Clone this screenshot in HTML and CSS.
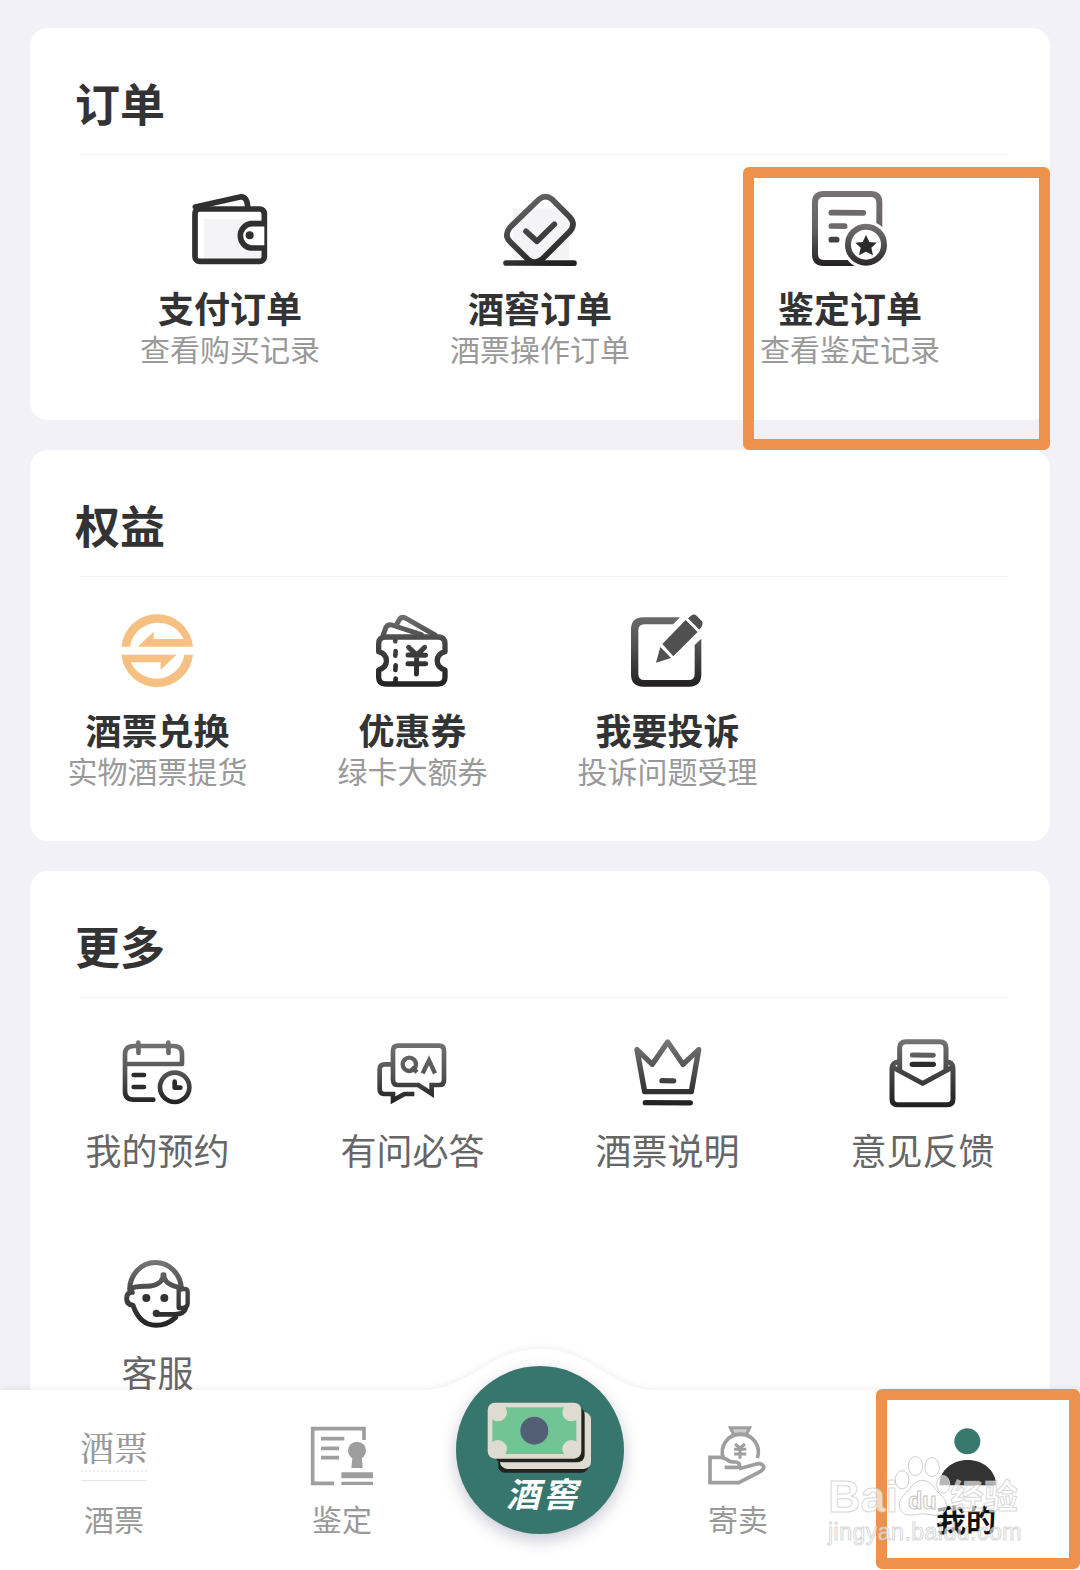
FILE: index.html
```html
<!DOCTYPE html>
<html lang="zh-CN">
<head>
    <meta charset="UTF-8" />
    <meta name="viewport" content="width=device-width, initial-scale=1.0" />
    <title>我的</title>
    <link rel="stylesheet" href="styles.css">
</head>
<body>
    <main class="content">
        <section class="card">
            <h2>订单</h2>
            <div class="grid three">
                <div class="item">
                    <svg class="icon" viewBox="510 510 240 240">
                        <path class="shade" d="M552 597H725V716H552Z" />
                        <g class="line" stroke="#303030" stroke-width="17">
                            <rect x="525" y="567" width="208" height="157" rx="14" />
                            <path d="M526 561L660 531Q683 528 683 565" />
                            <path fill="#fff" d="M733 611H692a37 37 0 0 0 0 73H733" />
                        </g>
                        <circle cx="689" cy="646" r="12" fill="#303030" />
                    </svg>
                    <h3>支付订单</h3>
                    <p>查看购买记录</p>
                </div>
                <div class="item">
                    <svg class="icon" viewBox="180 60 240 240">
                        <linearGradient id="g2" gradientUnits="userSpaceOnUse" x1="240" y1="80" x2="320" y2="285">
                            <stop offset="0" stop-color="#666" /><stop offset="1" stop-color="#222" />
                        </linearGradient>
                        <path class="shade" d="M218 115H388V268H218Z" />
                        <g class="line" stroke="url(#g2)" stroke-width="17">
                            <path d="M297 88Q316 72 336 88L390 142Q408 163 390 184L306 268Q286 284 266 270L209 214Q192 195 209 173Z" />
                            <path d="M258 184L291 214L343 163" />
                            <path d="M198 279L402 279.5" />
                        </g>
                    </svg>
                    <h3>酒窖订单</h3>
                    <p>酒票操作订单</p>
                </div>
                <div class="item">
                    <svg class="icon" viewBox="240 90 240 240">
                        <linearGradient id="g3" gradientUnits="userSpaceOnUse" x1="0" y1="95" x2="0" y2="318">
                            <stop offset="0" stop-color="#777374" /><stop offset="0.5" stop-color="#666264" /><stop offset="1" stop-color="#232122" />
                        </linearGradient>
                        <linearGradient id="g3b" gradientUnits="userSpaceOnUse" x1="0" y1="190" x2="0" y2="318">
                            <stop offset="0" stop-color="#777374" /><stop offset="1" stop-color="#2a2829" />
                        </linearGradient>
                        <path class="line" stroke="url(#g3)" stroke-width="18" d="M370 309H281Q255 309 255 283V128Q255 102 281 102H422Q448 102 448 128V200" />
                        <path class="line" stroke="#6e6a6c" stroke-width="17" d="M304 158L400 158.5M304 198L344 198.5" />
                        <path class="line" stroke="#444143" stroke-width="17" d="M304 239H320" />
                        <circle cx="408" cy="254" r="72" fill="#fff" />
                        <circle cx="408" cy="254" r="54" fill="#fff" stroke="url(#g3b)" stroke-width="18" />
                        <path fill="#2c2a2d" d="M408 225L418 246L440 248L424 263L429 286L408 275L387 286L392 263L376 248L398 246Z" />
                    </svg>
                    <h3>鉴定订单</h3>
                    <p>查看鉴定记录</p>
                </div>
            </div>
        </section>

        <section class="card">
            <h2>权益</h2>
            <div class="grid">
                <div class="item">
                    <svg class="icon" viewBox="204 64 240 240" fill="#f6c083">
                        <path id="swap" d="M214 168A108 108 0 0 1 429 168H263L311 123V145H401A85 85 0 0 0 240 168Z" />
                        <use href="#swap" transform="rotate(180 321.5 180)" />
                    </svg>
                    <h3>酒票兑换</h3>
                    <p>实物酒票提货</p>
                </div>
                <div class="item">
                    <svg class="icon" viewBox="130 64 240 240">
                        <linearGradient id="g5" gradientUnits="userSpaceOnUse" x1="0" y1="75" x2="0" y2="285">
                            <stop offset="0" stop-color="#707070" /><stop offset="0.4" stop-color="#444" /><stop offset="1" stop-color="#222" />
                        </linearGradient>
                        <g class="line" stroke="url(#g5)" stroke-width="16">
                            <path d="M168 139H325Q346 139 346 160V183C315 192 315 228 346 238V260Q346 280 325 280H168Q147 280 147 260V238C178 228 178 192 147 183V160Q147 139 168 139Z" />
                            <path stroke-width="15" d="M161 132L168 112Q173 100 187 103L275 132M202 100L209 87Q216 76 229 83L316 133" />
                            <path stroke-width="14" d="M197 145V152M198 181L197 195M198 224L197 238M198 264L197 276" />
                            <path stroke-width="15" d="M237 170L261 193L285 170M235 193L288 193.5M235 219L288 219.5M261 195L260.500 250" />
                        </g>
                    </svg>
                    <h3>优惠券</h3>
                    <p>绿卡大额券</p>
                </div>
                <div class="item">
                    <svg class="icon" viewBox="894 64 240 240">
                        <linearGradient id="g6" gradientUnits="userSpaceOnUse" x1="0" y1="75" x2="0" y2="288">
                            <stop offset="0" stop-color="#6c6c6c" /><stop offset="0.5" stop-color="#4c4b4b" /><stop offset="1" stop-color="#231f20" />
                        </linearGradient>
                        <path fill="url(#g6)" d="M1050 80H940Q903 80 903 117V251Q903 288 940 288H1078Q1114 288 1114 251V144L1094 163V250Q1094 268 1076 268H943Q925 268 925 250V119Q925 101 943 101H1029Z" />
                        <path fill="#505050" d="M1067 88L1103 124L1030 197L997 160ZM991 169L1023 202L978 216ZM1074 83L1083 75Q1092 68 1100 75L1116 92Q1122 104 1108 117Z" />
                    </svg>
                    <h3>我要投诉</h3>
                    <p>投诉问题受理</p>
                </div>
            </div>
        </section>

        <section class="card">
            <h2>更多</h2>
            <div class="grid more">
                <div class="item">
                    <svg class="icon" viewBox="175 38 240 240">
                        <linearGradient id="g7" gradientUnits="userSpaceOnUse" x1="0" y1="60" x2="0" y2="250">
                            <stop offset="0" stop-color="#747474" /><stop offset="0.5" stop-color="#555" /><stop offset="1" stop-color="#222" />
                        </linearGradient>
                        <g class="line" stroke="url(#g7)" stroke-width="14">
                            <path d="M281 238H222Q196 238 196 212V102Q196 77 222 77H342Q367 77 367 102V131H198" />
                            <path d="M236 67L236.500 98M326 67L326.500 98" />
                            <circle cx="345" cy="201" r="44" />
                        </g>
                        <path class="line" stroke="#2b2b2b" stroke-width="14" d="M222 164H253M222 200H253M345 184V202H362" />
                    </svg>
                    <span>我的预约</span>
                </div>
                <div class="item">
                    <svg class="icon" viewBox="940 38 240 240">
                        <linearGradient id="g8" gradientUnits="userSpaceOnUse" x1="0" y1="70" x2="0" y2="245">
                            <stop offset="0" stop-color="#707070" /><stop offset="0.5" stop-color="#555" /><stop offset="1" stop-color="#222" />
                        </linearGradient>
                        <g class="line sharp" stroke="url(#g8)" stroke-width="14">
                            <path d="M1016 76H1138Q1153 76 1153 91V178Q1153 194 1138 194H1116V220L1076 194H1016Q1000 194 1000 178V91Q1000 76 1016 76Z" />
                            <path d="M996 132H975Q960 132 960 147V206Q960 221 973 221H1000V240L1034 221H1064" />
                            <circle cx="1049" cy="132" r="20" stroke-width="13" />
                            <path stroke-width="13" d="M1056 140L1072 156M1089 159L1108 120L1126 159" />
                        </g>
                    </svg>
                    <span>有问必答</span>
                </div>
                <div class="item">
                    <svg class="icon" viewBox="143 38 240 240">
                        <linearGradient id="g9" gradientUnits="userSpaceOnUse" x1="0" y1="60" x2="0" y2="250">
                            <stop offset="0" stop-color="#777" /><stop offset="1" stop-color="#222" />
                        </linearGradient>
                        <g class="line" stroke="url(#g9)" stroke-width="16">
                            <path d="M193 214H333L355 88L308 132L262 65L216 132L170 88Z" />
                            <path d="M245 181L280 181.500M195 247L330 247.500" />
                        </g>
                    </svg>
                    <span>酒票说明</span>
                </div>
                <div class="item">
                    <svg class="icon" viewBox="909 38 240 240">
                        <linearGradient id="g10" gradientUnits="userSpaceOnUse" x1="0" y1="60" x2="0" y2="255">
                            <stop offset="0" stop-color="#747474" /><stop offset="0.5" stop-color="#444" /><stop offset="1" stop-color="#222" />
                        </linearGradient>
                        <g class="line" stroke="url(#g10)" stroke-width="15">
                            <path d="M958 125Q936 124 936 146V236Q936 253 953 253H1102Q1119 253 1119 236V146Q1119 124 1099 125" />
                            <path d="M959 148V83Q959 64 978 64H1079Q1098 64 1098 83V148" />
                            <path d="M940 142L1028 189L1115 142" />
                            <path d="M997 104L1060 104.500" />
                        </g>
                        <path class="line" stroke="#2b2b2b" stroke-width="16" d="M997 132H1060" />
                    </svg>
                    <span>意见反馈</span>
                </div>
                <div class="item">
                    <svg class="icon" viewBox="175 45 240 240">
                        <linearGradient id="g11" gradientUnits="userSpaceOnUse" x1="0" y1="60" x2="0" y2="262">
                            <stop offset="0" stop-color="#777" /><stop offset="0.5" stop-color="#444" /><stop offset="1" stop-color="#222" />
                        </linearGradient>
                        <g class="line" stroke="url(#g11)" stroke-width="15">
                            <path d="M210 150A77 81 0 0 1 365 148" />
                            <path d="M212 146Q228 138 262 139Q303 136 310 112V104L313 104V112Q320 136 365 143" />
                            <path d="M218 157Q200 158 201 177Q202 194 220 196Q240 256 289 256Q322 256 348 232" />
                            <path stroke-width="14" d="M290 223H345Q374 223 379 203" />
                            <path stroke-width="13" d="M357 147H376Q384 147 384 157V190Q384 203 370 204H357Z" />
                        </g>
                        <g fill="#333">
                            <circle cx="260" cy="174" r="12" />
                            <circle cx="314" cy="174" r="12" />
                            <circle cx="290" cy="220" r="11" />
                        </g>
                    </svg>
                    <span>客服</span>
                </div>
            </div>
        </section>
    </main>

    <div class="mark mark-order"></div>

    <nav class="tabbar">
        <svg class="tabbar-bg" viewBox="0 0 1080 226">
            <path fill="#fff" d="M0 45H424C444 45 456 37 474 28C500 12 515 4 540 4C565 4 580 12 606 28C624 38 634 45 656 45H1080V226H0Z" />
        </svg>
        <div class="tab">
            <div class="tab-logo">
                <b>酒票</b>
                <i></i>
                <u></u>
            </div>
            <span>酒票</span>
        </div>
        <div class="tab">
            <svg class="icon" viewBox="726 540 240 240" fill="#9e9e9e">
                <path fill="none" stroke="#9e9e9e" stroke-width="11" d="M822 730H758V566H912V600M783 596H853M783 625H837M783 653H837" />
                <circle cx="891" cy="632" r="27" />
                <path d="M878 645H905L908 684H874ZM844 697H939V715H844ZM844 725H939V735H844Z" />
            </svg>
            <span>鉴定</span>
        </div>
        <div class="tab tab-main">
            <div class="cellar">
                <svg viewBox="198 210 330 225">
                    <rect x="238" y="261" width="270" height="167" rx="20" fill="#222" />
                    <rect x="243" y="246" width="273" height="171" rx="22" fill="#dedcd0" />
                    <rect x="228" y="232" width="269" height="165" rx="22" fill="#222" />
                    <rect x="206" y="218" width="281" height="168" rx="22" fill="#dedcd0" />
                    <rect x="220" y="232" width="252" height="140" fill="#71c594" />
                    <g fill="#dedcd0">
                        <circle cx="237" cy="247" r="27" />
                        <circle cx="457" cy="247" r="27" />
                        <circle cx="237" cy="357" r="27" />
                        <circle cx="457" cy="357" r="27" />
                    </g>
                    <circle cx="346" cy="302" r="42" fill="#525f75" />
                </svg>
                <em>酒窖</em>
            </div>
        </div>
        <div class="tab">
            <svg class="icon" viewBox="832 270 240 240">
                <g fill="none" stroke="#9e9e9e" stroke-width="11">
                    <path fill="#ccc" stroke-width="9" d="M929 293H987L977 314H939Z" />
                    <path d="M908 384A54 54 0 1 1 1010 384" />
                    <path stroke-width="9" d="M943 342L958 354L973 342M940 358H977M940 372H977M958 354V386" />
                    <path d="M912 412H955Q960 398 946 396Q928 397 918 388Q908 382 898 382H868V458H954L1020 424Q1034 414 1027 406Q1018 398 1005 403L955 416" />
                </g>
            </svg>
            <span>寄卖</span>
        </div>
        <div class="tab active">
            <svg class="icon" viewBox="380 150 240 240">
                <circle cx="504" cy="214" r="39" fill="#37796d" />
                <path fill="#333" d="M420 346C420 300 460 270 505 270C550 270 590 300 590 346Z" />
            </svg>
            <span>我的</span>
        </div>
    </nav>

    <div class="mark mark-mine"></div>

    <div class="watermark">
        <div class="watermark-logo">
            <span>Bai</span>
            <svg viewBox="280 250 180 190">
                <g fill="#fff" fill-opacity="0.65" stroke="#ccc" stroke-width="3">
                    <ellipse cx="306" cy="326" rx="21" ry="28" />
                    <ellipse cx="347" cy="284" rx="22" ry="29" />
                    <ellipse cx="398" cy="287" rx="22" ry="29" />
                    <ellipse cx="432" cy="340" rx="20" ry="27" />
                    <path d="M368 328C340 328 332 356 312 372C286 396 296 432 328 434C350 435 356 430 370 430C386 430 396 437 416 434C446 430 450 394 426 374C406 358 398 328 368 328Z" />
                </g>
                <text x="324" y="416">du</text>
            </svg>
            <span class="cn">经验</span>
        </div>
        <div class="watermark-url">jingyan.baidu.com</div>
    </div>
</body>
</html>
```
FILE: styles.css
```css
* {
    box-sizing: border-box;
}

body {
    position: relative;
    margin: 0;
    width: 1080px;
    height: 1570px;
    overflow: hidden;
    background: #f2f1f7;
    color: #333;
    font-family: "Noto Sans CJK SC", "Liberation Sans", sans-serif;
}

h2, h3, p {
    margin: 0;
}

.content {
    display: flex;
    flex-direction: column;
    gap: 30px;
    padding: 28px 30px 0;
}

.card {
    height: 391.5px;
    background: #fff;
    border-radius: 18px;
}

.card:last-child {
    height: 720px;
}

.card h2 {
    margin: 0 42px 0 50px;
    padding: 45px 0 21px;
    border-bottom: 1px solid #f3f3f3;
    font-size: 45px;
    line-height: 60px;
    font-weight: 700;
    text-indent: -5px;
}

.grid {
    display: grid;
    grid-template-columns: repeat(4, 1fr);
    row-gap: 81px;
    padding-top: 35px;
}

.grid.three {
    grid-template-columns: repeat(3, 1fr);
    padding-left: 45px;
    padding-right: 45px;
}

.item {
    display: flex;
    flex-direction: column;
    align-items: center;
    white-space: nowrap;
}

.icon {
    display: block;
    width: 80px;
    height: 80px;
}

.line {
    fill: none;
    stroke-linecap: round;
    stroke-linejoin: round;
}

.line.sharp {
    stroke-linecap: butt;
    stroke-linejoin: miter;
}

.shade {
    fill: #f4f4f6;
}

.item h3 {
    margin-top: 15px;
    font-size: 36px;
    line-height: 44px;
    font-weight: 700;
}

.item p {
    font-size: 30px;
    line-height: 38px;
    color: #999;
}

.item span {
    margin: 14px 0 3px;
    font-size: 36px;
    line-height: 44px;
    color: #666;
}

/* bottom tab bar */
.tabbar {
    position: absolute;
    left: 0;
    bottom: 0;
    width: 1080px;
    height: 226px;
    display: grid;
    grid-template-columns: 228px 228px 168px 228px 228px;
}

.tabbar-bg {
    position: absolute;
    left: 0;
    top: 1px;
    width: 1080px;
    height: 226px;
    filter: drop-shadow(0 -2px 3px rgba(0, 0, 0, 0.06));
}

.tab {
    position: relative;
    display: flex;
    flex-direction: column;
    align-items: center;
    padding-top: 76px;
}

.tab span {
    margin-top: -2px;
    font-size: 30px;
    line-height: 40px;
    color: #999;
}

.tab.active span {
    color: #111;
    font-weight: 700;
}

.tab-logo {
    display: flex;
    flex-direction: column;
    align-items: center;
    width: 80px;
    height: 80px;
}

.tab-logo b {
    margin-top: 6px;
    font-family: "Noto Serif CJK SC", "Noto Sans CJK SC", serif;
    font-size: 34px;
    line-height: 42px;
    font-weight: 500;
    color: #999;
}

.tab-logo i {
    width: 66px;
    margin-top: 2px;
    border-top: 2px dotted #ececec;
}

.tab-logo u {
    width: 66px;
    margin-top: 8px;
    border-top: 1px solid #e6e6e6;
}

.tab-main {
    padding-top: 22px;
}

.cellar {
    display: flex;
    flex-direction: column;
    align-items: center;
    width: 168px;
    height: 168px;
    padding-top: 34px;
    border-radius: 50%;
    background: #37766c;
    box-shadow: 0 6px 16px rgba(40, 40, 90, 0.25);
}

.cellar svg {
    width: 110px;
    height: 75px;
}

.cellar em {
    margin: -2px 0 0 6px;
    font-size: 34px;
    line-height: 40px;
    font-weight: 700;
    letter-spacing: 3px;
    color: #fff;
}

/* orange highlight frames */
.mark {
    position: absolute;
    border: 11px solid #ee924b;
    border-radius: 6px;
}

.mark-order {
    left: 743px;
    top: 167px;
    width: 307px;
    height: 283px;
}

.mark-mine {
    left: 876px;
    top: 1389px;
    width: 204px;
    height: 180px;
}

.watermark {
    position: absolute;
    left: 828px;
    top: 1455px;
    width: 200px;
    font-family: "Liberation Sans", "Noto Sans CJK SC", sans-serif;
    color: rgba(255, 255, 255, 0.65);
    white-space: nowrap;
    -webkit-text-stroke: 1px rgba(190, 190, 190, 0.6);
}

.watermark-logo {
    display: flex;
    height: 62px;
    font-size: 45px;
    line-height: 84px;
    font-weight: 700;
}

.watermark-logo span {
    width: 65px;
}

.watermark-logo svg {
    width: 60px;
    height: 62px;
    margin-right: -3px;
}

.watermark-logo svg text {
    fill: rgba(255, 255, 255, 0.7);
    stroke: #c4c4c4;
    stroke-width: 3px;
    font-size: 72px;
}

.watermark-logo .cn {
    line-height: 84px;
    font-size: 34px;
}

.watermark-url {
    font-size: 23px;
    line-height: 30px;
    letter-spacing: 0.5px;
}
```
